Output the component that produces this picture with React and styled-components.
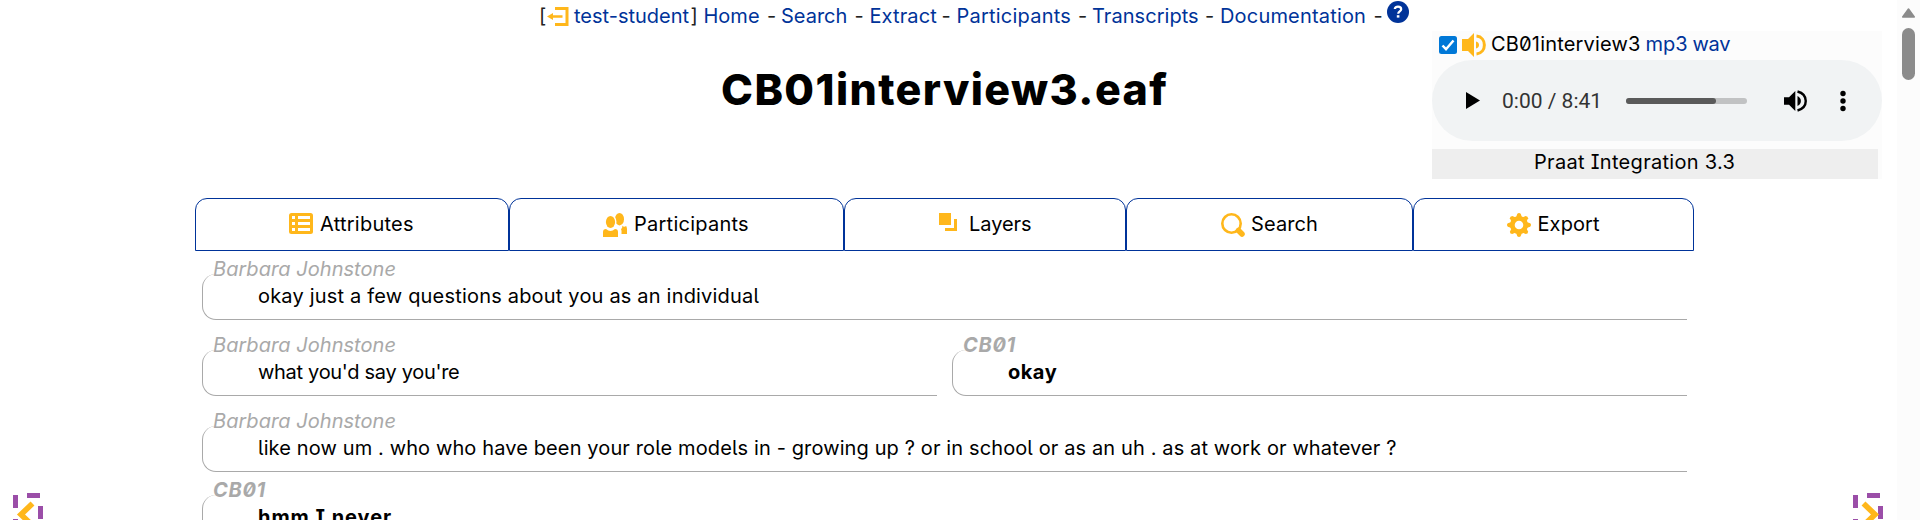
import React from 'react';
import styled, { createGlobalStyle } from 'styled-components';

const BLUE = '#003399';
const AMBER = '#ffb71b';

const GlobalStyle = createGlobalStyle`
  * { box-sizing: border-box; }
  html, body { margin: 0; overflow: hidden; background: #fff; }
  body {
    font: 20px/24px Inter, "Liberation Sans", sans-serif;
    font-feature-settings: "zero", "ss02", "cv08";
    color: #000;
  }
  svg { display: block; flex: none; }
`;

const Window = styled.div`
  display: flex;
  width: 1920px;
  height: 520px;
  overflow: hidden;
`;

const Page = styled.div`
  width: 1897px;
  flex: none;
`;

const Header = styled.header`
  display: flex;
  height: 198px;
`;

const Banner = styled.div`
  width: 1432px;
  flex: none;
`;

const Nav = styled.nav`
  display: flex;
  height: 26px;
  padding: 4px 0 0 539px;
  white-space: pre;
`;

const NavItem = styled.a`
  width: ${(p) => p.$w}px;
  flex: none;
  color: ${BLUE};
  letter-spacing: ${(p) => p.$ls || 0}px;
`;

const NavMark = styled.span`
  width: ${(p) => p.$w}px;
  flex: none;
  color: #222;
`;

const IconSlot = styled.span`
  width: ${(p) => p.$w}px;
  margin-top: ${(p) => p.$top || 0}px;
  flex: none;
`;

const Title = styled.h1`
  margin: 37px 0 0;
  padding-left: 721px;
  font-size: 43px;
  line-height: 52px;
  font-weight: 800;
  letter-spacing: 1.4px;
  font-feature-settings: normal;
  white-space: nowrap;
`;

const Media = styled.aside`
  width: 450px;
  height: 148px;
  margin-top: 31px;
  background: #fcfcfc;
`;

const Track = styled.div`
  display: flex;
  height: 29px;
  padding: 0 0 0 7px;
  white-space: nowrap;
`;

const TrackName = styled.span`
  width: ${(p) => p.$w}px;
  flex: none;
  margin-top: 1px;
  color: ${(p) => (p.$link ? BLUE : '#000')};
  letter-spacing: ${(p) => p.$ls || 0}px;
`;

const Player = styled.div`
  display: flex;
  align-items: center;
  height: 81px;
  padding-left: 34px;
  border-radius: 41px;
  background: #f1f3f4;
`;

const Time = styled.span`
  width: 124px;
  margin-left: 22px;
  font-family: Roboto, sans-serif;
  font-feature-settings: normal;
  font-size: 21px;
  color: #333;
  white-space: nowrap;
`;

const Slider = styled.div`
  width: 121px;
  height: 6px;
  margin-right: 37px;
  border-radius: 3px;
  overflow: hidden;
  background: #c1c2c3;
`;

const Buffered = styled.div`
  width: 90px;
  height: 6px;
  border-radius: 0 3px 3px 0;
  background: #5a5a5a;
`;

const Praat = styled.div`
  width: 446px;
  height: 30px;
  margin-top: 8px;
  padding: 1px 0 0 102px;
  background: #eee;
  letter-spacing: 0.3px;
  white-space: nowrap;
`;

const Body = styled.div`
  display: flex;
  height: 322px;
`;

const Gutter = styled.div`
  width: ${(p) => p.$w}px;
  flex: none;
  padding: 295px 0 0 ${(p) => p.$left}px;
`;

const Main = styled.main`
  width: 1500px;
  flex: none;
`;

const Tabs = styled.div`
  display: flex;
  height: 53px;
`;

const Tab = styled.div`
  display: flex;
  width: ${(p) => p.$w}px;
  flex: none;
  padding: 13px 0 0 ${(p) => p.$left - 1}px;
  border: 1px solid ${BLUE};
  border-radius: 12px 12px 0 0;
  white-space: nowrap;
  letter-spacing: ${(p) => p.$ls || 0}px;
`;

const TabIcon = styled.span`
  width: ${(p) => p.$w}px;
  flex: none;
  padding-top: 1px;
`;

const Row = styled.section`
  display: flex;
  gap: 15px;
  height: 69px;
  margin: 0 8px ${(p) => (p.$tight ? 0 : 7)}px 7px;
  padding-top: 6px;
`;

const Turn = styled.div`
  flex: 1;
  min-width: 0;
  font-weight: ${(p) => (p.$strong ? 700 : 400)};
`;

const Speaker = styled.div`
  height: 24px;
  padding-left: 11px;
  color: #a9a9a9;
  font-style: italic;
  letter-spacing: ${(p) => p.$ls || 0.05}px;
`;

const Bubble = styled.div`
  height: 46px;
  margin-top: -7px;
  padding: 10px 0 0 55px;
  border: solid #a9a9a9;
  border-width: 0 0 1px 1px;
  border-radius: 14px 0 0 14px;
  letter-spacing: ${(p) => p.$ls || 0}px;
  white-space: nowrap;
`;

const Scrollbar = styled.div`
  width: 23px;
  flex: none;
  padding: 8px 0 0 4px;
  background: #fcfcfc;
`;

const Thumb = styled.div`
  width: 13px;
  height: 52px;
  margin: 10px 0 0 1px;
  border-radius: 7px;
  background: #8b8b8b;
`;

const Logout = () => (
  <svg width="22" height="19" viewBox="0 0 22 19" fill={AMBER}>
    <path d="M8 0h13.500v19H8v-3h10.500V3H8z" />
    <path d="M0 9.500L6 6v2.300h9.500v2.400H6V13z" />
  </svg>
);

const Help = () => (
  <svg width="22" height="22" viewBox="0 0 22 22">
    <circle cx="11" cy="11" r="11" fill={BLUE} />
    <path d="M7.800 8.100c0-3.300 6.400-3.300 6.400.1 0 2.300-3 2.100-3 4.600" fill="none" stroke="#fff" strokeWidth="2.200" />
    <rect x="9.800" y="14.200" width="2.600" height="2.400" fill="#fff" />
  </svg>
);

const Checkbox = () => (
  <svg width="18" height="18" viewBox="0 0 18 18">
    <rect width="18" height="18" rx="2.500" fill="#0078d7" />
    <path d="M3.500 9.500l3.500 3.700 7.500-8.700" fill="none" stroke="#fff" strokeWidth="2.500" />
  </svg>
);

const AmberSpeaker = () => (
  <svg width="24" height="24" viewBox="0 0 24 24" fill={AMBER}>
    <path d="M0 6h6l6-6v24l-6-6H0z" />
    <path d="M14 8.500c4 .5 4 6.500 0 7z" />
    <path d="M14.500 3c10.500 1 10.500 17 0 18" fill="none" stroke={AMBER} strokeWidth="3" />
  </svg>
);

const Play = () => (
  <svg width="14" height="17" viewBox="0 0 14 17">
    <path d="M0 0l14 8.500L0 17z" />
  </svg>
);

const Volume = () => (
  <svg width="23" height="22" viewBox="0 0 23 22">
    <path d="M0 7.300h5L11.300 1v20L5 14.700H0z" />
    <path d="M13.500 6c4.500 2 4.500 8 0 10z" />
    <path d="M13.500 1.500c11 3 11 16 0 19" fill="none" stroke="#000" strokeWidth="2.400" />
  </svg>
);

const Dots = () => (
  <svg width="6" height="22" viewBox="0 0 6 22">
    <circle cx="3" cy="3.500" r="2.700" />
    <circle cx="3" cy="11" r="2.700" />
    <circle cx="3" cy="18.500" r="2.700" />
  </svg>
);

const ListIcon = () => (
  <svg width="24" height="21" viewBox="0 0 24 21">
    <rect width="24" height="21" rx="2.500" fill={AMBER} />
    <path d="M3 3h3v3H3zM9 3h12v3H9zM3 9h3v3H3zM9 9h12v3H9zM3 15h3v3H3zM9 15h12v3H9z" fill="#fff" />
  </svg>
);

const PeopleIcon = () => (
  <svg width="24" height="24" viewBox="0 0 24 24" fill={AMBER}>
    <ellipse cx="16.500" cy="6.200" rx="4.500" ry="6.200" />
    <path d="M18 16c1.500-1 1.500-2.500 1-3.500 1.500 1.500 3 1.500 4 .5.700.7 1 2 1 3V21h-5.500c0-2 .3-3.500-.5-5z" />
    <ellipse cx="7.500" cy="9" rx="6" ry="7.500" fill="#fff" />
    <ellipse cx="7.500" cy="9" rx="4.600" ry="6" />
    <path d="M0 24v-5c0-2 1-3 3-3 3 2.500 6 2.500 9 0 2 0 3 1 3 3v5z" />
  </svg>
);

const LayersIcon = () => (
  <svg width="18" height="18" viewBox="0 0 18 18" fill={AMBER}>
    <path d="M0 0h12v12H0zM15 6h3v12H6v-3h9z" />
  </svg>
);

const SearchIcon = () => (
  <svg width="24" height="24" viewBox="0 0 24 24">
    <circle cx="10.500" cy="10.500" r="9.200" fill="none" stroke={AMBER} strokeWidth="2.600" />
    <path d="M17.500 17.500l3.500 3.500" stroke={AMBER} strokeWidth="5.500" strokeLinecap="round" />
  </svg>
);

const GearIcon = () => (
  <svg width="24" height="24" viewBox="0 0 24 24">
    <circle cx="12" cy="12" r="6.700" fill="none" stroke={AMBER} strokeWidth="4.800" />
    <g fill={AMBER}>
      {[0, 45, 90, 135, 180, 225, 270, 315].map((a) => (
        <path key={a} d="M9 4.500L10.300 0.800Q12-.8 13.700 .8L15 4.500z" transform={`rotate(${a} 12 12)`} />
      ))}
    </g>
  </svg>
);

const Corner = ({ chevron }) => (
  <svg width="31" height="27" viewBox="0 0 31 27">
    <path d="M0 2h5v13H0zM14 0h13v5H14zM25 13h5v13h-5zM0 26h5v5H0z" fill="#9b4ea8" />
    <path d={chevron} fill="none" stroke={AMBER} strokeWidth="5.600" />
  </svg>
);

const UpArrow = () => (
  <svg width="15" height="10" viewBox="0 0 15 10">
    <path d="M7.500 1l5.800 8H1.700z" fill="#8b8b8b" stroke="#8b8b8b" strokeWidth="1.500" strokeLinejoin="round" />
  </svg>
);

const LINKS = [
  ['Home', 63.5, 14, 0],
  ['Search', 73.5, 15, 0],
  ['Extract', 72, 15, 0.1],
  ['Participants', 121.5, 14, 0.22],
  ['Transcripts', 113, 15, 0.05],
  ['Documentation', 153.5, 13.5, 0.18],
];

const TABS = [
  ['Attributes', 314, 94, 31, 0.25, ListIcon],
  ['Participants', 335, 94, 31, 0.25, PeopleIcon],
  ['Layers', 282, 95, 30, -0.05, LayersIcon],
  ['Search', 287, 95, 30, 0.1, SearchIcon],
  ['Export', 281, 94, 30.500, 0.1, GearIcon],
];

export default function App() {
  return (
    <>
      <GlobalStyle />
      <Window>
        <Page>
          <Header>
            <Banner>
              <Nav>
                <NavMark $w={8}>[</NavMark>
                <IconSlot $w={27} $top={3}><Logout /></IconSlot>
                <NavItem $w={116.5}>test-student</NavItem>
                <NavMark $w={13}>]</NavMark>
                {LINKS.map(([label, w, sep, ls]) => (
                  <React.Fragment key={label}>
                    <NavItem $w={w} $ls={ls}>{label}</NavItem>
                    <NavMark $w={sep}>-</NavMark>
                  </React.Fragment>
                ))}
                <IconSlot $w={22} $top={-3}><Help /></IconSlot>
              </Nav>
              <Title>CB01interview3.eaf</Title>
            </Banner>
            <Media>
              <Track>
                <IconSlot $w={23} $top={5}><Checkbox /></IconSlot>
                <IconSlot $w={29} $top={2}><AmberSpeaker /></IconSlot>
                <TrackName $w={154.5} $ls={0.18}>CB01interview3</TrackName>
                <TrackName $link $w={47}>mp3</TrackName>
                <TrackName $link $w={40} $ls={-0.3}>wav</TrackName>
              </Track>
              <Player>
                <Play />
                <Time>0:00 / 8:41</Time>
                <Slider><Buffered /></Slider>
                <Volume />
                <IconSlot $w={33} />
                <Dots />
              </Player>
              <Praat>Praat Integration 3.3</Praat>
            </Media>
          </Header>
          <Body>
            <Gutter $w={195} $left={13}><Corner chevron="M19.500 10.500L8 21.500L19.500 32.500" /></Gutter>
            <Main>
              <Tabs>
                {TABS.map(([label, w, left, iconW, ls, Icon]) => (
                  <Tab key={label} $w={w} $left={left} $ls={ls}>
                    <TabIcon $w={iconW}><Icon /></TabIcon>
                    {label}
                  </Tab>
                ))}
              </Tabs>
              <Row>
                <Turn>
                  <Speaker>Barbara Johnstone</Speaker>
                  <Bubble $ls={0.19}>okay just a few questions about you as an individual</Bubble>
                </Turn>
              </Row>
              <Row>
                <Turn>
                  <Speaker>Barbara Johnstone</Speaker>
                  <Bubble $ls={-0.3}>what you'd say you're</Bubble>
                </Turn>
                <Turn $strong>
                  <Speaker $ls={0.7}>CB01</Speaker>
                  <Bubble $ls={0.5}>okay</Bubble>
                </Turn>
              </Row>
              <Row $tight>
                <Turn>
                  <Speaker>Barbara Johnstone</Speaker>
                  <Bubble $ls={0.12}>
                    like now um . who who have been your role models in - growing up ? or in school or as an uh . as at work or whatever ?
                  </Bubble>
                </Turn>
              </Row>
              <Row>
                <Turn $strong>
                  <Speaker $ls={0.7}>CB01</Speaker>
                  <Bubble $ls={0.95}>hmm I never</Bubble>
                </Turn>
              </Row>
            </Main>
            <Gutter $w={202} $left={158}><Corner chevron="M10.500 10.500L22 21.500L10.500 32.500" /></Gutter>
          </Body>
        </Page>
        <Scrollbar>
          <UpArrow />
          <Thumb />
        </Scrollbar>
      </Window>
    </>
  );
}
